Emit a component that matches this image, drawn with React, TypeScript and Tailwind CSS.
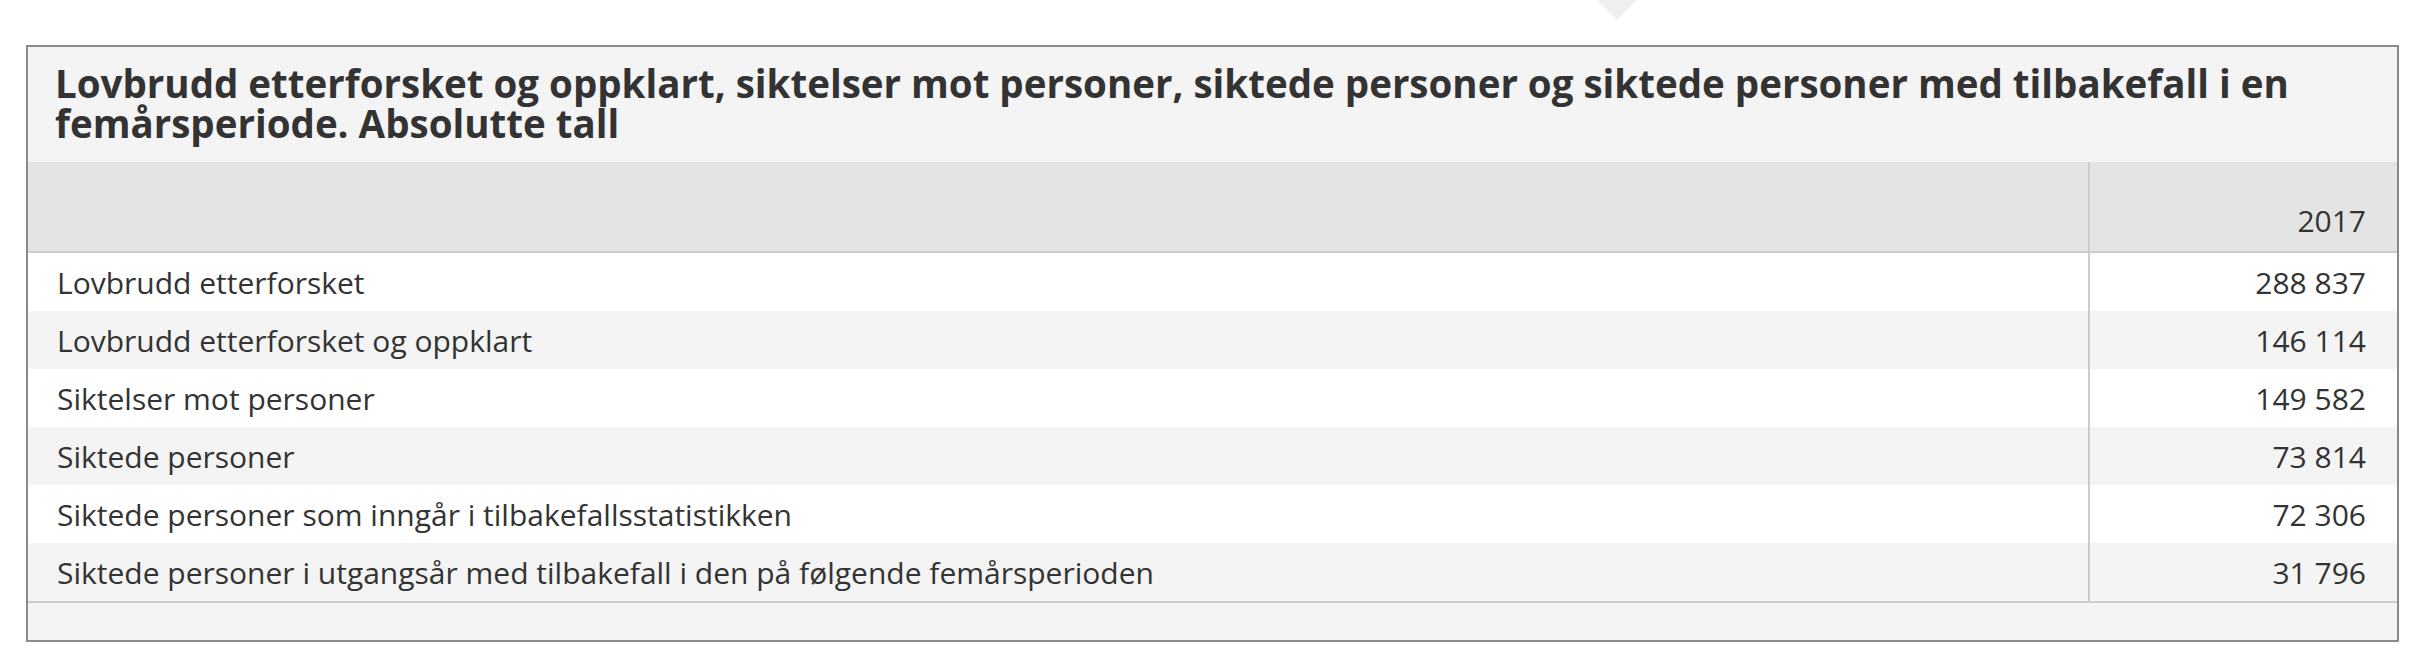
import React from "react";

type Row = { label: string; value: string };

const rows: Row[] = [
  { label: "Lovbrudd etterforsket", value: "288 837" },
  { label: "Lovbrudd etterforsket og oppklart", value: "146 114" },
  { label: "Siktelser mot personer", value: "149 582" },
  { label: "Siktede personer", value: "73 814" },
  { label: "Siktede personer som inngår i tilbakefallsstatistikken", value: "72 306" },
  { label: "Siktede personer i utgangsår med tilbakefall i den på følgende femårsperioden", value: "31 796" },
];

export default function App() {
  return (
    <div className="w-[2434px] h-[670px] bg-white text-[#333] font-['Open_Sans',sans-serif]">
      {/* little pointer left over from the tab above */}
      <div className="h-[45px] pl-[1597px]">
        <svg width="40" height="20" viewBox="0 0 40 20" className="block">
          <path d="M0 0 L40 0 L20 20 Z" fill="#f0f0f0" />
        </svg>
      </div>

      <div className="ml-[26px] w-[2373px] border-2 border-[#8a8a8a]">
        <div className="bg-[#f4f4f4] px-[27px] pt-[16px] pb-[19px]">
          <h2 className="text-[38.5px] leading-[40px] font-bold text-[#333]">
            Lovbrudd etterforsket og oppklart, siktelser mot personer, siktede personer og siktede personer med tilbakefall i en femårsperiode. Absolutte tall
          </h2>
        </div>

        <div className="grid grid-cols-[2060px_309px] h-[91px] bg-[#e4e4e4] border-b-2 border-[#cccccc]">
          <div />
          <div className="border-l-2 border-[#cccccc] flex items-end justify-end pr-[31px] pb-[8px] text-[30px]">
            2017
          </div>
        </div>

        {rows.map((r, i) => (
          <TableRow key={r.label} row={r} striped={i % 2 === 1} />
        ))}

        <div className="h-[39px] bg-[#f4f4f4] border-t-2 border-[#cccccc]" />
      </div>
    </div>
  );
}

function TableRow(props: { row: Row; striped: boolean }) {
  return (
    <div
      className={
        props.striped
          ? "grid grid-cols-[2060px_309px] h-[58px] bg-[#f4f4f4] text-[30px]"
          : "grid grid-cols-[2060px_309px] h-[58px] bg-white text-[30px]"
      }
    >
      <div className="flex items-center pl-[29px]">{props.row.label}</div>
      <div className="border-l-2 border-[#cccccc] flex items-center justify-end pr-[31px]">
        {props.row.value}
      </div>
    </div>
  );
}
